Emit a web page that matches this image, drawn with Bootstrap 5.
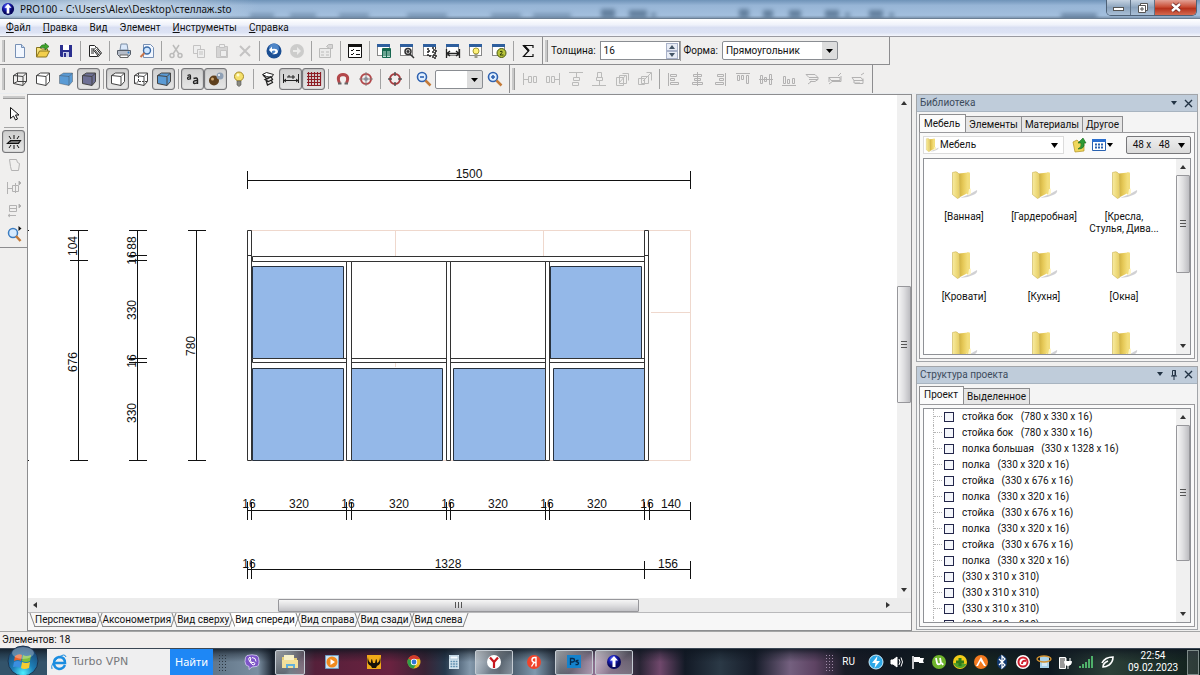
<!DOCTYPE html>
<html lang="ru">
<head>
<meta charset="utf-8">
<meta name="viewport" content="width=device-width, initial-scale=1">
<title>PRO100 - C:\Users\Alex\Desktop\стеллаж.sto</title>
<link href="https://cdn.jsdelivr.net/npm/bootstrap@5.3.0/dist/css/bootstrap.min.css" rel="stylesheet">
<style>
  :root { --face: #f0efee; --line: #8d8d8f; --soft: #b9b9bb; --dock: #bfccda; }
  body { font: 10px/16px Roboto, "Noto Sans", sans-serif; color: #111; background: var(--face); }
  button, input, select { font: inherit; color: inherit; }
  button { background: none; border: 0; padding: 0; }
  ul { list-style: none; margin: 0; padding: 0; }
  svg { display: block; flex: none; }

  .win-title { height: 19px; padding-left: 1px; gap: 5px; font: 10px/16px "Noto Sans", sans-serif; overflow: hidden;
    background: radial-gradient(ellipse 150px 26px at 110px 8px, #d9e4efcc, #d9e4ef00), linear-gradient(#6f93b8, #97b5d6 30%, #a3bfdd 85%, #7f97b1); border-bottom: 1px solid #6b7f94; }
  .win-ghost { filter: blur(2px); opacity: .55; height: 18px; min-width: 0; overflow: hidden; }
  .win-btns { height: 16px; border: 1px solid #4e6176; border-top: 0; border-radius: 0 0 5px 5px; overflow: hidden; margin-right: 3px; }
  .win-btns button { width: 24px; height: 15px; background: linear-gradient(#c5d3e2, #8ba3bd 50%, #a9bfd6); border-right: 1px solid #5f7287; display: grid; place-items: center; }
  .win-btns .win-x { width: 41px; border: 0; background: linear-gradient(#e3a195, #c84a32 48%, #b5301a 55%, #d46a50); }

  .menu-strip { height: 18px; padding-left: 6px; gap: 12px; background: linear-gradient(#fff, #eef1fa 35%, #d9dff2 50%, #dde3f4 80%, #f4f6fc); border-bottom: 1px solid #9a9aa0; }
  .menu-strip a { color: #111; text-decoration: none; }
  .menu-strip a::first-letter { text-decoration: underline; }
  .menu-strip a.plain::first-letter { text-decoration: none; }

  .tool-row { background: var(--face); }
  .tool-band { height: 28px; padding: 0 3px 0 2px; border: solid var(--line); border-width: 0 1px 1px 0; }
  .tool-grip { width: 3px; height: 22px; margin-right: 3px; background: #c9c9c9; border-right: 1px solid #9d9d9d; }
  .tool-sep { width: 6px; height: 20px; background: linear-gradient(#a2a2a2, #a2a2a2) center / 1px 100% no-repeat; }
  .tool-btn { width: 23px; height: 22px; display: grid; place-items: center; border-radius: 3px; }
  .tool-btn.is-on { border: 1px solid #77777a; background: linear-gradient(#cfcfcf, #e6e6e6); box-shadow: inset 0 0 1px #555; }
  .tool-btn:disabled { opacity: .5; filter: grayscale(1); }
  .tool-field { height: 19px; background: #fff; border: 1px solid #8a8d92; padding: 0 3px; border-radius: 0; }
  .spin { width: 80px; }
  .spin-keys { margin-left: -14px; width: 12px; z-index: 1; }
  .spin-keys button { height: 8px; border: 1px solid #a9b2c9; background: #e8ecf5; display: grid; place-items: center; }
  .pick { appearance: none; border-radius: 2px; background: url("data:image/svg+xml,%3Csvg xmlns='http://www.w3.org/2000/svg' width='15' height='17'%3E%3Crect width='15' height='17' fill='%23ddd'/%3E%3Cpath d='M4 7h7l-3.500 4z' fill='%23000'/%3E%3C/svg%3E") right 0 center no-repeat #fff; }
  .pick-shape { width: 116px; }
  .pick-zoom { width: 48px; }

  .tool-side { width: 27px; padding-top: 2px; }
  .tool-side .side-in { border-bottom: 1px solid var(--line); padding-bottom: 2px; }
  .tool-side .tool-btn { height: 23px; }
  .side-grip { width: 22px; height: 3px; margin-bottom: 3px; background: #c9c9c9; border-bottom: 1px solid #9d9d9d; }
  .side-sep { width: 20px; height: 1px; background: #a5a5a5; margin: 2px 0; }

  .sheet { border: 1px solid var(--line); background: #fff; }
  .draw { background: #fff; overflow: hidden; }
  .draw svg { width: 100%; height: 100%; position: absolute; inset: 0; }
  .draw text { font: 12px "Liberation Sans", Arial, sans-serif; fill: #111; text-anchor: middle; }
  .bar-v { width: 14px; background: #f0f0f0; }
  .bar-h { height: 14px; background: #ececec; }
  .arr { height: 16px; display: grid; place-items: center; }
  .thumb { border: 1px solid #97979b; border-radius: 1px; display: grid; place-items: center; background: linear-gradient(90deg, #f6f6f6, #dedee0 50%, #bdbdc1); }
  .thumb-h { background: linear-gradient(#f6f6f6, #dedee0 50%, #c2c2c6); height: 13px; }

  .sheet-tabs { height: 18px; background: #f7f7f7; border-top: 1px solid var(--soft); padding-left: 4px; }
  .sheet-tab { position: relative; height: 14px; padding: 0 3px; line-height: 14px; white-space: nowrap; }
  .sheet-tab::before, .sheet-tab::after { content: ""; position: absolute; top: 0; bottom: 0; width: 50%; border-bottom: 1px solid #858585; }
  .sheet-tab::before { left: 0; border-left: 1px solid #858585; transform: skewX(20deg); }
  .sheet-tab::after { right: 0; border-right: 1px solid #858585; transform: skewX(-20deg); }
  .sheet-tab.is-on { background: #fff; }
  .sheet-tab.is-on::before, .sheet-tab.is-on::after { border-bottom-color: #fff; }

  .docks { width: 284px; padding: 0 2px 1px 0; gap: 4px; margin-left: 4px; }
  .dock-box { border: 1px solid #a2a5a9; background: #f4f4f4; }
  .dock-head { height: 17px; background: var(--dock); color: #3c4b5c; padding: 0 4px 0 3px; gap: 6px; border-bottom: 1px solid #a8b4c0; }
  .dock-in { margin: 3px 2px 2px; }
  .dock-tabs { height: 17px; }
  .dock-tab { height: 16px; line-height: 16px; padding: 0 3px; border: 1px solid #8d8d8f; border-bottom: 0; background: #e6e6e6; margin-left: -1px; white-space: nowrap; }
  .dock-tab.is-on { height: 18px; line-height: 16px; background: #fbfbfb; padding: 0 5px 0 4px; margin-left: 0; position: relative; z-index: 1; }
  .dock-page { border: 1px solid #9a9a9d; background: #fafafa; padding: 3px; }
  .folder-pick { height: 18px; border: 1px solid #dcdcdc; background: #fff; }
  .folder-pick select { appearance: none; border: 0; background: none; outline: 0; }
  .size-pick { width: 65px; height: 18px; border: 1px solid #77777a; border-radius: 2px; background: linear-gradient(#eee, #dadada); }
  .well { border: 1px solid #8f9196; background: #fff; overflow: hidden; }
  .folders { display: grid; grid-template-columns: repeat(3, 80px); grid-auto-rows: 80px; height: 0; min-height: 100%; }
  .folders li { text-align: center; line-height: 12px; padding-top: 10px; overflow: hidden; }
  .folders svg { margin: 0 auto 10px; }
  .tree { height: 0; min-height: 100%; padding-left: 9px; }
  .tree li { height: 16px; border-left: 1px dotted #b5b5b5; gap: 8px; }
  .tree li::before { content: ""; width: 8px; margin-right: -6px; border-top: 1px dotted #b5b5b5; }
  .tree input { appearance: none; width: 10px; height: 10px; border: 1px solid #23264a; background: #f4f6fb; margin: 0; }
  .tree label { white-space: pre; }

  .status-strip { height: 17px; padding-left: 2px; background: #f1eeed; border-top: 1px solid #a5a5a5; }
  .task-strip { height: 27px; color: #fff; border-top: 1px solid #3b4653;
    background: linear-gradient(#0e1620cc 0, #0e162066 20%, #0000 50%), linear-gradient(90deg, #33536a 0, #33536a 47px, #64788a 216px, #7b8fa2 258px, #1a222e 273px, #4d5a66 290px, #56203a 315px, #6a2240 390px, #3a2335 425px, #26394d 445px, #8499ac 470px, #33404e 500px, #7f99ae 535px, #252d3b 560px, #8d6f90 595px, #2a2535 640px, #70486c 660px, #131a26 685px, #2b3946 720px, #161c29 755px, #74607f 790px, #5e4363 815px, #1a1c27 845px, #101820 900px, #182720 980px, #0e1820 1050px, #2c4038 1110px, #10201c 100%); }
  .orb-cell { width: 47px; }
  .orb-cell svg { position: absolute; left: 7px; top: -4px; }
  .seek { width: 123px; height: 26px; background: #efeff0; color: #8c8c8c; gap: 5px; padding-left: 4px; font: 11px/24px "DejaVu Sans", sans-serif; }
  .seek input { width: 90px; border: 0; background: none; padding: 0; color: #77797c; }
  .find-btn { width: 43px; height: 26px; background: #1e87f5; color: #fff; font: 11px/24px "Noto Sans", sans-serif; }
  .dots { width: 8px; height: 17px; background: radial-gradient(circle, #2c3640 1px, #0000 1px) 0 0 / 3px 3px; margin-left: 5px; }
  .task-cell { width: 40px; height: 25px; display: grid; place-items: center; }
  .task-cell.is-open { width: 38px; margin: 0 1px; border: 1px solid #c5ccd3; border-radius: 2px; background: linear-gradient(135deg, #ffffff90, #ffffff30 60%, #ffffff50); }
  .tray { gap: 5px; }
  .tray .dots { background-image: radial-gradient(circle, #a08aa8 1px, #0000 1px); }
  .tray-clock { width: 50px; line-height: 12px; text-align: center; margin: 0 4px 0 8px; }
  .peek { width: 12px; height: 25px; border: 1px solid #7f8c8a; background: #ffffff20; margin-right: 1px; }
</style>
</head>
<body class="d-flex flex-column vh-100 overflow-hidden">

<svg width="0" height="0" class="position-absolute" aria-hidden="true">
  <defs>
    <linearGradient id="gold" x1="0" x2="1"><stop offset="0" stop-color="#cfb040"/><stop offset=".45" stop-color="#e6c958"/><stop offset="1" stop-color="#f5e180"/></linearGradient>
    <linearGradient id="flap" x1="0" x2="1"><stop offset="0" stop-color="#f8eca0"/><stop offset="1" stop-color="#e6cd62"/></linearGradient>
    <radialGradient id="ball" cx=".4" cy=".3"><stop offset="0" stop-color="#7a8cff"/><stop offset=".5" stop-color="#1a20c0"/><stop offset="1" stop-color="#080860"/></radialGradient>
    <radialGradient id="orb" cx=".5" cy=".9" r=".9"><stop offset="0" stop-color="#4ff0ff"/><stop offset=".4" stop-color="#1d7fb8"/><stop offset="1" stop-color="#1c3e66"/></radialGradient>
    <g id="cube" stroke="#444" stroke-linejoin="round"><path d="M1.500 4.500l4-2.500h9v8.500l-3.500 4-9.500-2z"/><path d="M1.500 4.500l9.500 1 3.500-3.500M11 5.500v9" fill="none"/></g>
    <g id="wnd"><rect x="1.500" y="2.500" width="12" height="10" fill="#fff" stroke="#888"/><path d="M1 1h13v3H1z" fill="#2e5f9e"/></g>
    <symbol id="app" viewBox="0 0 16 16"><circle cx="8" cy="8" r="7" fill="url(#ball)"/><path d="M8 2l4 4.500H9.500V13h-3V6.500H4z" fill="#fff"/></symbol>
    <symbol id="folder" viewBox="0 0 28 32"><path d="M10 29l10-4 7-4q1 3-4 5-6 3-13 3z" fill="#bdbdc0" opacity=".7"/><path d="M9 4.500l9-1v20.500l-8 4z" fill="url(#gold)"/><path d="M17 3.500q3-1 3 1v15l1 1v4l-4 1z" fill="#f3de7c"/><path d="M19 20h2v5l-3 1z" fill="#fff6c8"/><path d="M2.500 3.500q4-1.500 5 0l2 2v23l-2 1-5-4z" fill="url(#flap)" stroke="#c9b050" stroke-width=".6"/></symbol>
  </defs>
</svg>

<header>
  <div class="win-title d-flex align-items-center">
    <svg width="14" height="14"><use href="#app"/></svg>
    <span class="text-nowrap">PRO100 - C:\Users\Alex\Desktop\стеллаж.sto</span>
    <div class="win-ghost flex-fill" aria-hidden="true"><svg width="860" height="18"><path d="M13 16h24M53 16h26M102 16h30M170 16h40M254 16h30M296 16h38" stroke="#4f6c8b" stroke-width="5"/><path d="M364 9h14v9h-14zM392 10h18v8h-18zM414 13h5v4h-5zM502 9h10v9h-10zM526 10h10v8h-10zM552 10h12v8h-12zM588 10h14v8h-14zM608 13h5v4h-5zM632 10h14v8h-14zM652 13h5v4h-5z" fill="#33506e"/><path d="M824 16h48" stroke="#33506e" stroke-width="5"/></svg></div>
    <div class="win-btns d-flex align-self-start flex-shrink-0">
      <button aria-label="Свернуть"><svg width="12" height="8"><rect x=".5" y="3.500" width="10" height="3" fill="#fff" stroke="#555"/></svg></button>
      <button aria-label="Развернуть"><svg width="12" height="12" fill="#fff" stroke="#555"><path d="M3.500 1.500h7v7h-7z"/><path d="M1.500 3.500h7v7h-7z"/><path d="M4 6h2v2H4z"/></svg></button>
      <button class="win-x" aria-label="Закрыть"><svg width="12" height="11"><path d="M2 2l8 7M10 2L2 9" stroke="#622" stroke-width="4"/><path d="M2 2l8 7M10 2L2 9" stroke="#fff" stroke-width="2.500"/></svg></button>
    </div>
  </div>
  <nav class="menu-strip d-flex align-items-center">
    <a href="#" class="d-block">Файл</a><a href="#" class="d-block">Правка</a><a href="#" class="d-block plain">Вид</a><a href="#" class="d-block plain">Элемент</a><a href="#" class="d-block">Инструменты</a><a href="#" class="d-block">Справка</a>
  </nav>

  <div class="tool-row d-flex">
    <div class="tool-band d-flex align-items-center">
      <span class="tool-grip"></span>
      <button class="tool-btn" aria-label="Новый"><svg width="16" height="16"><path d="M3.500 1.500h6l3 3v10h-9z" fill="#f2f7ff" stroke="#7790b5"/><path d="M9.500 1.500v3h3" fill="#c9dbf2" stroke="#7790b5"/></svg></button>
      <button class="tool-btn" aria-label="Открыть"><svg width="16" height="16"><path d="M1.500 14V4.500h4l1 1.500h6v3" fill="#f6e27a" stroke="#8a7420"/><path d="M1.500 14l3-6h10l-3 6z" fill="#f3cf4c" stroke="#8a7420"/><path d="M5 5q1-4 5-3V0l4 3.500L10 7V5q-3-1-5 0z" fill="#3fa52c" stroke="#1f6415" stroke-width=".6"/></svg></button>
      <button class="tool-btn" aria-label="Сохранить"><svg width="16" height="16"><path d="M2 2h12v12H3l-1-1z" fill="#2b2f8f"/><path d="M5 2h6v5H5z" fill="#fff"/><path d="M5 9h6v5H5z" fill="#c8cce8"/><path d="M6 10h2v4H6z" fill="#2b2f8f"/></svg></button>
      <span class="tool-sep"></span>
      <button class="tool-btn" aria-label="Свойства проекта"><svg width="16" height="16" fill="#fff" stroke="#222"><path d="M2.500 2.500h5l3 3v8h-8z"/><path d="M4 6h3M4 8h3M4 10h3"/><path d="M6.500 7l3-3 5 6-3 3.500z"/><path d="M8 7l4 5M9.500 6l4 5"/></svg></button>
      <span class="tool-sep"></span>
      <button class="tool-btn" aria-label="Печать"><svg width="16" height="16"><path d="M4 7l1-6h6l1 6z" fill="#dbe9fb" stroke="#7d8ea5"/><path d="M1.500 7.500h13v4l-2 2h-9l-2-2z" fill="#b5bcc8" stroke="#565d68"/><path d="M4 12h8v2.500H4z" fill="#fff" stroke="#666"/><circle cx="12.500" cy="9.500" r="1" fill="#2a80d0"/></svg></button>
      <button class="tool-btn" aria-label="Просмотр"><svg width="16" height="16"><path d="M4.500 1.500h7l3 3v10h-10z" fill="#f2f7ff" stroke="#7790b5"/><circle cx="8" cy="7.500" r="3.500" fill="#cfe6ff" stroke="#3c6ca8" stroke-width="1.400"/><path d="M5.500 10l-4 4" stroke="#c9744a" stroke-width="2"/></svg></button>
      <span class="tool-sep"></span>
      <button class="tool-btn" disabled aria-label="Вырезать"><svg width="16" height="16" fill="none" stroke="#888" stroke-width="1.500"><path d="M5 2l6 9M11 2L5 11"/><circle cx="4" cy="12.500" r="2"/><circle cx="12" cy="12.500" r="2"/></svg></button>
      <button class="tool-btn" disabled aria-label="Копировать"><svg width="16" height="16" fill="#eee" stroke="#999"><path d="M2.500 2.500h7v8h-7z"/><path d="M6.500 6.500h7v8h-7zM8 9h4M8 11h4"/></svg></button>
      <button class="tool-btn" disabled aria-label="Вставить"><svg width="16" height="16" fill="#bbb" stroke="#999"><path d="M2.500 3.500h11v11h-11z"/><path d="M5.500 1.500h5v3h-5zM6.500 7.500h6v6h-6z" fill="#eee"/></svg></button>
      <button class="tool-btn" disabled aria-label="Удалить"><svg width="16" height="16"><path d="M3 3l10 10M13 3L3 13" stroke="#999" stroke-width="2"/></svg></button>
      <span class="tool-sep"></span>
      <button class="tool-btn" aria-label="Отменить"><svg width="16" height="16"><circle cx="8" cy="8" r="7.500" fill="#1c4f93"/><circle cx="8" cy="5.500" r="5" fill="#4e86c8"/><path d="M6 11q6 1 6-3-1-3-6-2V3.500L3 7l3 3V8q3-1 3.500.500Q9 10 6 11z" fill="#fff"/></svg></button>
      <button class="tool-btn" disabled aria-label="Вернуть"><svg width="16" height="16"><circle cx="8" cy="8" r="7" fill="#aaa"/><path d="M4 7h4V4l4 4-4 4V9H4z" fill="#e8e8e8"/></svg></button>
      <span class="tool-sep"></span>
      <button class="tool-btn" disabled aria-label="Свойства"><svg width="16" height="16" fill="#e8e8e8" stroke="#888"><path d="M1.500 5.500h11v9h-11zM3 9h3M3 12h3M8 9h3M8 12h3"/><path d="M8.500 3.500l2-2h4v4h-3z" fill="#bbb"/></svg></button>
      <span class="tool-sep"></span>
      <button class="tool-btn" aria-label="Параметры"><svg width="16" height="16"><path d="M1.500 2.500h13v12h-13z" fill="#fff" stroke="#111"/><path d="M1 1h14v3H1z" fill="#111"/><path d="M4 7l1 1 2-2M4 11l1 1 2-2M9 7.500h4M9 11.500h4" fill="none" stroke="#111"/></svg></button>
      <span class="tool-sep"></span>
      <button class="tool-btn" aria-label="Смета"><svg width="16" height="16"><use href="#wnd"/><path d="M6.500 5.500h8v9h-8z" fill="#bfe0d4" stroke="#17664f"/><path d="M7 6h7v2H7zM7 10h7M7 12h7M10.500 8v6" stroke="#17664f" fill="#17664f"/></svg></button>
      <button class="tool-btn" aria-label="Обзор"><svg width="16" height="16"><use href="#wnd"/><circle cx="9" cy="8.500" r="3" fill="#ddd" stroke="#333" stroke-width="1.500"/><path d="M9 7v3M7.500 8.500h3M11 11l4 4" stroke="#333" stroke-width="1.500"/></svg></button>
      <button class="tool-btn" aria-label="Структура"><svg width="16" height="16"><use href="#wnd"/><path d="M6 5v8h3M6 8h3M11 7h3v3h-3zM11 12h3v3h-3zM10 5h4" fill="none" stroke="#222" stroke-width="1.500" stroke-dasharray="2 1"/></svg></button>
      <button class="tool-btn" aria-label="Размеры"><svg width="16" height="16"><use href="#wnd"/><path d="M1.500 6v9M14.500 6v9M2 10.500h12M5 8l-3 2.500L5 13M11 8l3 2.500-3 2.500" fill="none" stroke="#222" stroke-width="1.300"/></svg></button>
      <button class="tool-btn" aria-label="Свет"><svg width="16" height="16"><use href="#wnd"/><circle cx="8" cy="8" r="3" fill="#fff27a" stroke="#a59a30"/><path d="M6.500 11h3v4h-3z" fill="#9a9a8a"/></svg></button>
      <button class="tool-btn" aria-label="Цены"><svg width="16" height="16"><use href="#wnd"/><circle cx="10.500" cy="10" r="4.500" fill="#b9c43a" stroke="#4b5b14"/><path d="M9 8.500q3-1 2 1l-2 2.500h3.500" fill="none" stroke="#2d3a08"/></svg></button>
      <span class="tool-sep"></span>
      <button class="tool-btn" aria-label="Сумма"><svg width="16" height="16"><path d="M13 5V2.500H3.500L8.500 8l-5 5.500H13V11" fill="none" stroke="#111" stroke-width="1.200"/><path d="M4 2.500L9 8" stroke="#111" stroke-width="2"/></svg></button>
    </div>
    <div class="tool-band d-flex align-items-center">
      <span class="tool-grip"></span>
      <label for="thick" class="me-1">Толщина:</label>
      <input id="thick" class="tool-field spin" value="16">
      <span class="spin-keys d-flex flex-column"><button aria-label="Больше"><svg width="6" height="4"><path d="M0 4l3-4 3 4z" fill="#456"/></svg></button><button aria-label="Меньше"><svg width="6" height="4"><path d="M0 0l3 4 3-4z" fill="#456"/></svg></button></span>
      <span class="tool-sep"></span>
      <label for="shape" class="me-1">Форма:</label>
      <select id="shape" class="tool-field pick pick-shape me-5"><option>Прямоугольник</option></select>
    </div>
  </div>

  <div class="tool-row d-flex border-bottom border-secondary-subtle">
    <div class="tool-band d-flex align-items-center border-bottom-0">
      <span class="tool-grip"></span>
      <button class="tool-btn" aria-label="Каркас"><svg width="16" height="16" fill="none"><use href="#cube"/><path d="M5.500 2v8.500h9M5.500 10.500l-4 2" stroke="#444"/></svg></button>
      <button class="tool-btn" aria-label="Эскиз"><svg width="16" height="16" fill="#fff"><use href="#cube"/></svg></button>
      <button class="tool-btn" aria-label="Цвет"><svg width="16" height="16" fill="#5b9bd5"><use href="#cube" stroke-opacity=".4"/></svg></button>
      <button class="tool-btn is-on" aria-label="Текстуры"><svg width="16" height="16" fill="#6d6f94"><use href="#cube"/></svg></button>
      <span class="tool-sep"></span>
      <button class="tool-btn is-on" aria-label="Контуры"><svg width="16" height="16" fill="#fff"><use href="#cube"/></svg></button>
      <button class="tool-btn" aria-label="Полупрозрачность"><svg width="16" height="16" fill="#fff"><use href="#cube"/><path d="M5.500 2v8.500h9M5.500 10.500l-4 2" fill="none" stroke="#444" stroke-dasharray="2 1"/></svg></button>
      <button class="tool-btn is-on" aria-label="Затенение"><svg width="16" height="16" fill="#5b9bd5"><use href="#cube"/></svg></button>
      <span class="tool-sep"></span>
      <button class="tool-btn is-on" aria-label="Сглаживание"><svg width="16" height="16" fill="none" stroke="#222" stroke-width="1.200"><path d="M2.500 4.500q3-1.500 3 .5v3.500M5.500 6q-3-.3-3 1.200 0 2 3 .3"/><path d="M8.500 7.500q4-1.500 4 1v4.500M12.500 9.500q-4-.3-4 1.700 0 2.500 4 .3" stroke-width="1.400"/></svg></button>
      <button class="tool-btn is-on" aria-label="Материалы"><svg width="16" height="16"><circle cx="6" cy="9.500" r="5" fill="#5e3f1c"/><circle cx="4.500" cy="8" r="1.500" fill="#d0a870"/><circle cx="12" cy="5" r="3.500" fill="#8fa0b5"/><circle cx="11" cy="4" r="1" fill="#fff"/></svg></button>
      <button class="tool-btn" aria-label="Освещение"><svg width="16" height="16"><circle cx="8" cy="5.500" r="4.500" fill="#f5e06a" stroke="#a58a28"/><circle cx="7" cy="4" r="1.500" fill="#fffbd0"/><path d="M6 10h4v4l-2 1.500L6 14z" fill="#8a8a80" stroke="#555" stroke-width=".6"/></svg></button>
      <span class="tool-sep"></span>
      <button class="tool-btn" aria-label="Привязка"><svg width="16" height="16" fill="#fff" stroke="#222"><path d="M2.500 3.500l4-2 7 2-2 3-5-1z"/><path d="M3 4l4 4 3-1.500M5 8.500l6-3 1.500 3-4 2zM6 9l1.500 5 5-2.500-1-2" fill="none" stroke-width="1.300"/></svg></button>
      <button class="tool-btn is-on" aria-label="Размерные линии"><svg width="18" height="16" fill="none" stroke="#222"><path d="M1.500 3v9M16.500 3v9M2 9.500h14M4 8L2 9.500 4 11M14 8l2 1.500-2 1.500M6 7V5h2v2M10 5h2v2h-2z"/></svg></button>
      <button class="tool-btn is-on" aria-label="Сетка"><svg width="16" height="16"><path d="M2.500 1v14M5.500 1v14M8.500 1v14M11.500 1v14M14.500 1v14M1 2.500h14M1 5.500h14M1 8.500h14M1 11.500h14M1 14.500h14" stroke="#8d1c24" stroke-width="1.200"/></svg></button>
      <span class="tool-sep"></span>
      <button class="tool-btn" aria-label="Магнит"><svg width="16" height="16" fill="none"><path d="M4.500 12Q1 4 8 3.500q7 .5 3.500 8.500" stroke="#b2474a" stroke-width="3"/><path d="M3 12.500h3.500M9.500 12.500H13" stroke="#666" stroke-width="2"/></svg></button>
      <button class="tool-btn" aria-label="Центр"><svg width="16" height="16" fill="none"><circle cx="8" cy="8" r="5" stroke="#b2474a" stroke-width="2"/><circle cx="8" cy="8" r="2" fill="#8e9bb5"/><path d="M8 1v14M1 8h14" stroke="#888"/></svg></button>
      <span class="tool-sep"></span>
      <button class="tool-btn" aria-label="Поворот"><svg width="16" height="16" fill="none"><circle cx="8" cy="8" r="5" stroke="#a83c3f" stroke-width="2"/><path d="M8 1v4M8 11v4M1 8h4M11 8h4" stroke="#555" stroke-width="1.500"/></svg></button>
      <span class="tool-sep"></span>
      <button class="tool-btn" aria-label="Уменьшить"><svg width="16" height="16"><circle cx="6" cy="6" r="4.500" fill="#e2f0ff" stroke="#2f62b0" stroke-width="1.600"/><path d="M4 6h4" stroke="#2f62b0" stroke-width="1.600"/><path d="M9.500 9.500l5 5" stroke="#c47a38" stroke-width="2.500"/></svg></button>
      <select class="tool-field pick pick-zoom" aria-label="Масштаб"><option></option></select>
      <button class="tool-btn" aria-label="Увеличить"><svg width="16" height="16"><circle cx="6" cy="6" r="4.500" fill="#e2f0ff" stroke="#2f62b0" stroke-width="1.600"/><path d="M4 6h4M6 4v4" stroke="#2f62b0" stroke-width="1.600"/><path d="M9.500 9.500l5 5" stroke="#c47a38" stroke-width="2.500"/></svg></button>
    </div>
    <div class="tool-band d-flex align-items-center border-bottom-0">
      <span class="tool-grip"></span>
      <button class="tool-btn" disabled aria-label="К левому краю"><svg width="16" height="16" fill="none" stroke="#888"><path d="M1.500 2v12M2 8.500h4M6.500 5.500h3v6h-3zM11.500 5.500h3v6h-3z"/></svg></button>
      <button class="tool-btn" disabled aria-label="К правому краю"><svg width="16" height="16" fill="none" stroke="#888"><path d="M14.500 2v12M10 8.500h4M1.500 5.500h3v6h-3zM6.500 5.500h3v6h-3z"/></svg></button>
      <button class="tool-btn" disabled aria-label="К верху"><svg width="16" height="16" fill="none" stroke="#888"><path d="M1 1.500h14M8.500 2v4M5.500 6.500h6v3h-6zM4.500 11.500h6v3h-6z"/></svg></button>
      <button class="tool-btn" disabled aria-label="К низу"><svg width="16" height="16" fill="none" stroke="#888"><path d="M1 14.500h14M8.500 10v4M5.500 6.500h6v3h-6zM6.500 1.500h4v5h-4z"/></svg></button>
      <button class="tool-btn" disabled aria-label="Вперёд"><svg width="16" height="16" fill="none" stroke="#888"><path d="M2.500 6.500h7v8h-7zM5.500 4.500h7v8h-7zM8.500 2.500h6v7M5 12l7-8"/></svg></button>
      <button class="tool-btn" disabled aria-label="Назад"><svg width="16" height="16" fill="none" stroke="#888"><path d="M1.500 7.500h6v6h-6zM4.500 5.500h7v7h-7zM9.500 1.500h5v8M6 10l8-8"/></svg></button>
      <span class="tool-sep"></span>
      <button class="tool-btn" disabled aria-label="Выровнять влево"><svg width="16" height="16" fill="none" stroke="#777"><path d="M2.500 2v13M4.500 3.500h6v2h-6zM4.500 7.500h4v2h-4zM4.500 11.500h8v2h-8z"/></svg></button>
      <button class="tool-btn" disabled aria-label="По центру"><svg width="16" height="16" fill="none" stroke="#777"><path d="M8.500 1v14M4.500 3.500h8v2h-8zM5.500 7.500h6v2h-6zM3.500 11.500h10v2h-10z"/></svg></button>
      <button class="tool-btn" disabled aria-label="Выровнять вправо"><svg width="16" height="16" fill="none" stroke="#777"><path d="M13.500 2v13M5.500 3.500h6v2h-6zM7.500 7.500h4v2h-4zM3.500 11.500h8v2h-8z"/></svg></button>
      <button class="tool-btn" disabled aria-label="По верху"><svg width="16" height="16" fill="none" stroke="#777"><path d="M1 2.500h14M2.500 4.500h2v5h-2zM6.500 4.500h2v4h-2zM11.500 4.500h2v8h-2z"/></svg></button>
      <button class="tool-btn" disabled aria-label="По середине"><svg width="16" height="16" fill="none" stroke="#777"><path d="M1 8.500h14M2.500 4.500h2v8h-2zM6.500 6.500h2v4h-2zM11.500 3.500h2v10h-2z"/></svg></button>
      <button class="tool-btn" disabled aria-label="По низу"><svg width="16" height="16" fill="none" stroke="#777"><path d="M1 14.500h14M2.500 5.500h2v7h-2zM6.500 8.500h2v4h-2zM11.500 7.500h2v5h-2z"/></svg></button>
      <button class="tool-btn" disabled aria-label="Спереди"><svg width="16" height="16" fill="none" stroke="#777"><path d="M2 3.500h9l3 3H5zM5 8.500h9v-2M6 10.500h5l3-2M4 13l4-3"/></svg></button>
      <button class="tool-btn" disabled aria-label="По глубине"><svg width="16" height="16" fill="none" stroke="#777"><path d="M2 6.500h11v3H4zM2 6v5M5 10.500h9V5M2 13l4-3M11 5l3-3"/></svg></button>
      <button class="tool-btn" disabled aria-label="Сзади"><svg width="16" height="16" fill="none" stroke="#777"><path d="M2 6.500h9l2 3H4zM5 12.500h8v-5M4 9v3h6M11 4l3-2"/></svg></button>
    </div>
  </div>
</header>

<main class="d-flex flex-fill" style="min-height:0">
  <aside class="tool-side">
    <div class="side-in d-flex flex-column align-items-center">
      <span class="side-grip"></span>
      <button class="tool-btn" aria-label="Выбор"><svg width="16" height="16"><path d="M4.500 1.500v11l3-2.500 2 4 2-1-2-4h3.500z" fill="#fff" stroke="#111"/></svg></button>
      <span class="side-sep"></span>
      <button class="tool-btn is-on" aria-label="Автоцентр"><svg width="16" height="16" fill="none" stroke="#111"><path d="M1.500 9.500l3-3h10l-2 3zM3 8h11" stroke-width="1.200"/><path d="M8 1v4M8 11v4M3 2l2 3M13 2l-2 3M3 14l2-3M13 14l-2-3"/></svg></button>
      <button class="tool-btn" disabled aria-label="Форма"><svg width="16" height="16" fill="none" stroke="#777"><path d="M3.500 2.500h7l1 3 2 1-1 7h-7l-1-4z"/></svg></button>
      <button class="tool-btn" disabled aria-label="Сдвиг"><svg width="16" height="16" fill="none" stroke="#777"><path d="M1.500 2v12M2 8.500h4M6.500 5.500h6v6h-6zM9.500 3v10"/><path d="M13 1l2 2-2 2z" fill="#555"/></svg></button>
      <button class="tool-btn" disabled aria-label="Выравнивание"><svg width="16" height="16" fill="none" stroke="#777"><path d="M3.500 2.500h7v6h-7zM3.500 5.500h7M2 12.500h8M4 11l-2 1.500L4 14"/><path d="M13 1l2 2-2 2z" fill="#555"/></svg></button>
      <button class="tool-btn" aria-label="Лупа"><svg width="16" height="16"><circle cx="7" cy="7" r="4.500" fill="#d7ebff" stroke="#3b7cc0" stroke-width="1.500"/><path d="M10 10l4.500 5" stroke="#c47a38" stroke-width="2.500"/><path d="M12.500 0l3 2.500-3 2.500z" fill="#111"/></svg></button>
    </div>
  </aside>

  <section class="sheet d-flex flex-column flex-fill" style="min-width:0">
    <div class="d-flex flex-fill">
      <div class="draw flex-fill position-relative">
        <svg role="img" aria-label="Вид спереди стеллажа">
          <g transform="translate(-28 -95)">
            <g fill="none" stroke="#efd8cd"><path d="M247.500 230.500h443v230h-443zM651 312.500h39M395.500 230v26M543.500 230v26M395.500 361v6"/></g>
            <g fill="#94b8e8" stroke="#28323f"><path d="M252.500 266.500h91v92h-91zM550.500 266.500h91v92h-91zM252.500 368.500h91v92h-91zM351.500 368.500h91v92h-91zM453.500 368.500h92v92h-92zM553.500 368.500h91v92h-91z"/></g>
            <g fill="#fff" stroke="#333"><path d="M252.500 256.500h392v5h-392zM252.500 358.500h392v4h-392z"/><path d="M247.500 230.500h4v230h-4zM644.500 230.500h4v230h-4zM346.500 261.500h5v199h-5zM446.500 261.500h4v199h-4zM545.500 261.500h4v199h-4z"/><path d="M247 255.500h5M644 255.500h5"/></g>
            <g fill="none" stroke="#111">
              <path d="M247.500 180.500h443M247.500 171v18M690.500 171v18"/>
              <path d="M247.500 510.500h443M247.500 502v18M251.500 502v18M346.500 502v18M351.500 502v18M446.500 502v18M450.500 502v18M545.500 502v18M549.500 502v18M644.500 502v18M649.500 502v18M690.500 502v18"/>
              <path d="M247.500 569.500h443M247.500 561v18M251.500 561v18M644.500 561v18M690.500 561v18"/>
              <path d="M78.500 230v230M70 230.500h18M70 260.500h18M70 460.500h18M137.500 230v230M129 230.500h18M129 255.500h18M129 260.500h18M129 358.500h18M129 362.500h18M129 460.500h18M196.500 230v230M188 230.500h18M188 460.500h18M28 230.500h1M28 460.500h1"/>
            </g>
            <text x="469" y="178">1500</text>
            <text x="249" y="508">16</text><text x="299" y="508">320</text><text x="348" y="508">16</text><text x="399" y="508">320</text><text x="448" y="508">16</text><text x="498" y="508">320</text><text x="547" y="508">16</text><text x="597" y="508">320</text><text x="647" y="508">16</text><text x="671" y="508">140</text>
            <text x="249" y="568">16</text><text x="448" y="568">1328</text><text x="668" y="568">156</text>
            <text transform="translate(77 246) rotate(-90)">104</text><text transform="translate(77 362) rotate(-90)">676</text>
            <text transform="translate(136 243) rotate(-90)">88</text><text transform="translate(136 258) rotate(-90)">16</text><text transform="translate(136 310) rotate(-90)">330</text><text transform="translate(136 361) rotate(-90)">16</text><text transform="translate(136 413) rotate(-90)">330</text>
            <text transform="translate(195 346) rotate(-90)">780</text>
          </g>
        </svg>
      </div>
      <div class="bar-v d-flex flex-column">
        <i class="arr"><svg width="6" height="4"><path d="M0 4l3-4 3 4z" fill="#333"/></svg></i>
        <i style="flex:176"></i>
        <i class="thumb" style="flex:116"><svg width="6" height="8"><path d="M0 .5h6M0 3.500h6M0 6.500h6" stroke="#555"/></svg></i>
        <i style="flex:180"></i>
        <i class="arr"><svg width="6" height="4"><path d="M0 0l3 4 3-4z" fill="#333"/></svg></i>
      </div>
    </div>
    <div class="bar-h d-flex align-items-center">
      <svg width="14" height="6"><path d="M9 0v6L5 3z" fill="#333"/></svg>
      <i style="flex:236"></i>
      <i class="thumb thumb-h" style="flex:360"><svg width="8" height="6"><path d="M.5 0v6M3.500 0v6M6.500 0v6" stroke="#555"/></svg></i>
      <i style="flex:242"></i>
      <svg width="30" height="6"><path d="M5 0v6l4-3z" fill="#333"/></svg>
    </div>
    <div class="sheet-tabs d-flex">
      <button class="sheet-tab">Перспектива</button><button class="sheet-tab">Аксонометрия</button><button class="sheet-tab">Вид сверху</button><button class="sheet-tab is-on">Вид спереди</button><button class="sheet-tab">Вид справа</button><button class="sheet-tab">Вид сзади</button><button class="sheet-tab">Вид слева</button>
    </div>
  </section>

  <aside class="docks d-flex flex-column">
    <section class="dock-box d-flex flex-column" style="flex:268 0 0">
      <div class="dock-head d-flex align-items-center">
        <span class="me-auto">Библиотека</span>
        <button aria-label="Меню"><svg width="8" height="5"><path d="M1 0h6L4 4z" fill="#234"/></svg></button>
        <button aria-label="Закрыть"><svg width="9" height="9"><path d="M1 1l7 7M8 1L1 8" stroke="#234" stroke-width="1.400"/></svg></button>
      </div>
      <div class="dock-in d-flex flex-column flex-fill">
        <div class="dock-tabs d-flex align-items-end"><button class="dock-tab is-on">Мебель</button><button class="dock-tab">Элементы</button><button class="dock-tab">Материалы</button><button class="dock-tab">Другое</button></div>
        <div class="dock-page d-flex flex-column flex-fill gap-1">
          <div class="d-flex align-items-center">
            <div class="folder-pick d-flex align-items-center flex-fill">
              <svg width="16" height="16"><use href="#folder"/></svg>
              <select class="flex-fill" aria-label="Папка"><option>Мебель</option></select>
              <svg class="me-1" width="8" height="5"><path d="M0 0h7L3.500 5z" fill="#000"/></svg>
            </div>
            <button class="ms-2" aria-label="На уровень вверх"><svg width="16" height="16"><path d="M1 5l4-2 2 2h5v9l-9 1z" fill="#f0d75c" stroke="#b09020" stroke-width=".7"/><path d="M6 12q4-2 3-6H6l5-5 3 5h-2q1 6-6 6z" fill="#2e9a35" stroke="#13661a" stroke-width=".6"/></svg></button>
            <button class="ms-1 me-2" aria-label="Вид"><svg width="22" height="14"><path d="M.5 1.500h13v11H.500z" fill="#fff" stroke="#2a62b0"/><path d="M0 1h14v3H0z" fill="#2a6fd0"/><path d="M3 6.500h9M3 9.500h9" stroke="#2a62b0" stroke-width="2" stroke-dasharray="2 1"/><path d="M15 5h6l-3 4z" fill="#000"/></svg></button>
            <button class="size-pick d-flex align-items-center justify-content-end pe-1 gap-2 ms-1"><span>48 x &nbsp; 48</span><svg width="8" height="5"><path d="M0 0h7L3.500 5z" fill="#000"/></svg></button>
          </div>
          <div class="well d-flex flex-fill">
            <ul class="folders flex-fill">
              <li><svg width="28" height="32"><use href="#folder"/></svg>[Ванная]</li>
              <li><svg width="28" height="32"><use href="#folder"/></svg>[Гардеробная]</li>
              <li><svg width="28" height="32"><use href="#folder"/></svg>[Кресла,<br>Стулья, Дива...</li>
              <li><svg width="28" height="32"><use href="#folder"/></svg>[Кровати]</li>
              <li><svg width="28" height="32"><use href="#folder"/></svg>[Кухня]</li>
              <li><svg width="28" height="32"><use href="#folder"/></svg>[Окна]</li>
              <li><svg width="28" height="32"><use href="#folder"/></svg></li>
              <li><svg width="28" height="32"><use href="#folder"/></svg></li>
              <li><svg width="28" height="32"><use href="#folder"/></svg></li>
            </ul>
            <div class="bar-v d-flex flex-column">
              <i class="arr"><svg width="6" height="4"><path d="M0 4l3-4 3 4z" fill="#333"/></svg></i>
              <i class="thumb" style="flex:96"><svg width="6" height="8"><path d="M0 .5h6M0 3.500h6M0 6.500h6" stroke="#555"/></svg></i>
              <i style="flex:65"></i>
              <i class="arr"><svg width="6" height="4"><path d="M0 0l3 4 3-4z" fill="#333"/></svg></i>
            </div>
          </div>
        </div>
      </div>
    </section>

    <section class="dock-box d-flex flex-column" style="flex:264 0 0">
      <div class="dock-head d-flex align-items-center">
        <span class="me-auto">Структура проекта</span>
        <button aria-label="Меню"><svg width="8" height="5"><path d="M1 0h6L4 4z" fill="#234"/></svg></button>
        <button aria-label="Закрепить"><svg width="8" height="10" fill="none" stroke="#234"><path d="M2.500 .5h3v5h-3zM5 0v5M1 6h6M4 6v4"/></svg></button>
        <button aria-label="Закрыть"><svg width="9" height="9"><path d="M1 1l7 7M8 1L1 8" stroke="#234" stroke-width="1.400"/></svg></button>
      </div>
      <div class="dock-in d-flex flex-column flex-fill">
        <div class="dock-tabs d-flex align-items-end"><button class="dock-tab is-on">Проект</button><button class="dock-tab">Выделенное</button></div>
        <div class="dock-page d-flex flex-column flex-fill">
          <div class="well d-flex flex-fill">
            <ul class="tree flex-fill">
              <li class="d-flex align-items-center"><input type="checkbox" id="t1"><label for="t1">стойка бок   (780 x 330 x 16)</label></li>
              <li class="d-flex align-items-center"><input type="checkbox" id="t2"><label for="t2">стойка бок   (780 x 330 x 16)</label></li>
              <li class="d-flex align-items-center"><input type="checkbox" id="t3"><label for="t3">полка большая   (330 x 1328 x 16)</label></li>
              <li class="d-flex align-items-center"><input type="checkbox" id="t4"><label for="t4">полка   (330 x 320 x 16)</label></li>
              <li class="d-flex align-items-center"><input type="checkbox" id="t5"><label for="t5">стойка   (330 x 676 x 16)</label></li>
              <li class="d-flex align-items-center"><input type="checkbox" id="t6"><label for="t6">полка   (330 x 320 x 16)</label></li>
              <li class="d-flex align-items-center"><input type="checkbox" id="t7"><label for="t7">стойка   (330 x 676 x 16)</label></li>
              <li class="d-flex align-items-center"><input type="checkbox" id="t8"><label for="t8">полка   (330 x 320 x 16)</label></li>
              <li class="d-flex align-items-center"><input type="checkbox" id="t9"><label for="t9">стойка   (330 x 676 x 16)</label></li>
              <li class="d-flex align-items-center"><input type="checkbox" id="t10"><label for="t10">полка   (330 x 320 x 16)</label></li>
              <li class="d-flex align-items-center"><input type="checkbox" id="t11"><label for="t11">(330 x 310 x 310)</label></li>
              <li class="d-flex align-items-center"><input type="checkbox" id="t12"><label for="t12">(330 x 310 x 310)</label></li>
              <li class="d-flex align-items-center"><input type="checkbox" id="t13"><label for="t13">(330 x 310 x 310)</label></li>
              <li class="d-flex align-items-center"><input type="checkbox" id="t14"><label for="t14">(330 x 310 x 310)</label></li>
            </ul>
            <div class="bar-v d-flex flex-column">
              <i class="arr"><svg width="6" height="4"><path d="M0 4l3-4 3 4z" fill="#333"/></svg></i>
              <i class="thumb" style="flex:138"><svg width="6" height="8"><path d="M0 .5h6M0 3.500h6M0 6.500h6" stroke="#555"/></svg></i>
              <i style="flex:46"></i>
              <i class="arr"><svg width="6" height="4"><path d="M0 0l3 4 3-4z" fill="#333"/></svg></i>
            </div>
          </div>
        </div>
      </div>
    </section>
  </aside>
</main>

<div class="status-strip d-flex align-items-center">Элементов: 18</div>

<footer class="task-strip d-flex align-items-center">
  <button class="orb-cell position-relative align-self-stretch" aria-label="Пуск"><svg width="32" height="32"><circle cx="16" cy="16" r="15" fill="url(#orb)" stroke="#1d3550"/><path d="M8 11q4-3 7-1l-1 6q-3-2-7 0z" fill="#e8602c"/><path d="M16 10q3 2 8 0l-1 6q-4 2-8 0z" fill="#7fbf3a"/><path d="M7 17q4-2 7 0l-1 6q-3-2-7-1z" fill="#3b8fe0"/><path d="M15 17q4 2 8 0l-1 6q-5 2-8 0z" fill="#f8cc30"/><ellipse cx="16" cy="8" rx="11" ry="6" fill="#fff" opacity=".3"/></svg></button>
  <div class="seek d-flex align-items-center"><svg width="16" height="18" fill="none"><path d="M14 12q-2 4-6 4-5-1-5-6t5-6q6 0 6 6H4" stroke="#1b8de0" stroke-width="2.500"/><path d="M1 16Q-1 11 8 4q6-4 7 0" stroke="#1b8de0"/></svg><input value="Turbo VPN" aria-label="Поиск"></div>
  <button class="find-btn">Найти</button>
  <span class="dots"></span>
  <button class="task-cell ms-1" style="width:44px" aria-label="Viber"><svg width="16" height="16"><path d="M3 1.500q5-1.500 10 0 2 1 2 6t-3 5l-4 .5-3 2.500v-3q-4-.5-4-5 0-5 2-6z" fill="#7d55c7" stroke="#e5dcff" stroke-width=".7"/><path d="M5 4q-1 1 1 4t4 3l1-1.500-2-1.500-1 1-2-3 1-1-1-2zM8 3.500q4 0 4 4" fill="none" stroke="#fff"/></svg></button>
  <button class="task-cell is-open" style="width:30px" aria-label="Проводник"><svg width="18" height="16"><path d="M1 3h6l1 1h8v10H1z" fill="#e8cf72"/><path d="M3 1h10v8H3z" fill="#f7f0c8"/><path d="M1 6h16v8H1z" fill="#f3e09a"/><path d="M5 14v-4h9v4h-2v-2H7v2z" fill="#62b0dc"/></svg></button>
  <button class="task-cell ms-1" style="width:44px" aria-label="Проигрыватель"><svg width="16" height="16"><path d="M1.500 1.500h13v13h-13z" fill="#cfe2f2" stroke="#6d9cc4"/><circle cx="8" cy="8" r="5.500" fill="#f08a1e"/><path d="M6.500 5l4.500 3-4.500 3z" fill="#fff"/></svg></button>
  <button class="task-cell" aria-label="Игра"><svg width="16" height="16"><path d="M1 1h14v14H1z" fill="#f0a818"/><path d="M2 3q0 5 3 6 0-4 1-4l1 4h2l1-4q1 0 1 4 3-1 3-6 2 7-3 9l-1 2H6l-1-2Q0 10 2 3z" fill="#15100a"/></svg></button>
  <button class="task-cell" aria-label="Chrome"><svg width="16" height="16"><circle cx="8" cy="8" r="6.500" fill="#e8b820"/><path d="M8 8L2.400 4.700A6.500 6.500 0 0 1 14 5H8z" fill="#d43a2c"/><path d="M8 8L2.400 4.700A6.500 6.500 0 0 0 7.500 14.500L11 9z" fill="#2e9e48"/><circle cx="8" cy="8" r="3.200" fill="#fff"/><circle cx="8" cy="8" r="2.400" fill="#2f74d8"/></svg></button>
  <button class="task-cell" aria-label="Калькулятор"><svg width="16" height="16"><path d="M3 1h10v14H3z" fill="#d4e4ee"/><path d="M4 2h8v3H4z" fill="#f6fbff" stroke="#8fb0c8" stroke-width=".6"/><path d="M4.500 7.500h7M4.500 10h7M4.500 12.500h7" stroke="#5f8fb0" stroke-width="1.500" stroke-dasharray="1.800 .8"/></svg></button>
  <button class="task-cell is-open" aria-label="Яндекс Браузер"><svg width="16" height="16"><circle cx="8" cy="8" r="7" fill="#fff"/><path d="M4 3.500L8 8l4-4.500M8 8v6" fill="none" stroke="#c8171e" stroke-width="2.200"/></svg></button>
  <button class="task-cell" aria-label="Яндекс"><svg width="16" height="16"><circle cx="8" cy="8" r="7" fill="#f0432a"/><path d="M10 12.500v-9H8.500q-2.500 0-2.500 2.500t4 2.500M8 8.500l-2.500 4" fill="none" stroke="#fff" stroke-width="1.400"/></svg></button>
  <button class="task-cell is-open" aria-label="Photoshop"><svg width="16" height="16"><path d="M1 1h14v13H1z" fill="#1482cc"/><path d="M4.500 11V4.500h2q2 0 2 1.700t-2 1.800h-2M12.500 6.500q-3-.5-2.500 1 2 .5 2.500 1.500 0 2-3 1.500" fill="none" stroke="#062c50" stroke-width="1.300"/></svg></button>
  <button class="task-cell is-open" aria-label="PRO100"><svg width="16" height="16"><use href="#app"/></svg></button>
  <div class="tray d-flex align-items-center ms-auto">
    <span class="dots me-1"></span><span class="me-2">RU</span>
    <svg width="16" height="16"><circle cx="8" cy="8" r="7" fill="#2ea8e8" stroke="#cdeeff"/><path d="M9.500 2L4 9h3.500L6.500 14 12 7H8.500z" fill="#fff"/></svg>
    <svg width="16" height="16" fill="none" stroke="#fff"><path d="M2 6h2l4-3v10l-4-3H2z" fill="#fff"/><path d="M10 5q2 3 0 6M12 3.500q3 4.500 0 9"/></svg>
    <svg width="16" height="16"><path d="M3 2v13" stroke="#fff" stroke-width="1.500"/><path d="M4 3h6v1h4l-1 3 1 2H9V8H4z" fill="#fff"/></svg>
    <svg width="16" height="16"><circle cx="8" cy="8" r="7" fill="#6fb52c"/><path d="M5 4l1 5q1 2 3 1l1-1-1-5M11 9l1 2" fill="none" stroke="#fff" stroke-width="1.800"/></svg>
    <svg width="16" height="16"><circle cx="8" cy="8" r="7" fill="#f2cc18"/><path d="M1.500 9a7 7 0 0 0 13 1z" fill="#4fa32c"/><path d="M8 4v8M4 8h8" stroke="#2f7c1a" stroke-width="3"/></svg>
    <svg width="16" height="16"><circle cx="8" cy="8" r="7" fill="#f37a1f"/><path d="M3 12L8 3l5 9h-2L7.500 7 5 12z" fill="#fff"/></svg>
    <svg width="16" height="16"><ellipse cx="8" cy="8" rx="5" ry="7" fill="#123a70"/><path d="M5 5l6 6-3 3V2l3 3-6 6" fill="none" stroke="#fff" stroke-width="1.200"/></svg>
    <svg width="16" height="16"><circle cx="8" cy="8" r="7" fill="#fff"/><circle cx="8" cy="8" r="4.500" fill="none" stroke="#d0202e" stroke-width="2"/><path d="M7 10q0-4 4-3" fill="none" stroke="#d0202e" stroke-width="2"/></svg>
    <svg width="16" height="16"><path d="M4 2h9v12H4z" fill="#a8d0e8"/><path d="M6 9h5M6 11h5" stroke="#fff"/><ellipse cx="8" cy="5" rx="7" ry="3" fill="none" stroke="#d09030" stroke-width="1.400"/></svg>
    <svg width="16" height="16" fill="none" stroke="#fff"><path d="M2.500 3.500h6v11h-6z" fill="#999"/><path d="M9 4v3M13 4v3M7.500 7.500h7q0 4-3.500 4t-3.500-4zM11 11v4" fill="#fff"/></svg>
    <svg width="16" height="16"><path d="M2 14v-2M5 14v-4M8 14V8M11 14V5M14 14V2" stroke="#4fb06a" stroke-width="2"/></svg>
    <svg width="16" height="16" fill="none" stroke="#fff" stroke-width="1.600"><path d="M3 9q3-6 11-6 0 5-4 8-3 2-6 2 0-4 5-6"/></svg>
    <div class="tray-clock">22:54<br>09.02.2023</div>
    <button class="peek" aria-label="Свернуть все окна"></button>
  </div>
</footer>

<script src="https://cdn.jsdelivr.net/npm/bootstrap@5.3.0/dist/js/bootstrap.bundle.min.js"></script>
</body>
</html>
